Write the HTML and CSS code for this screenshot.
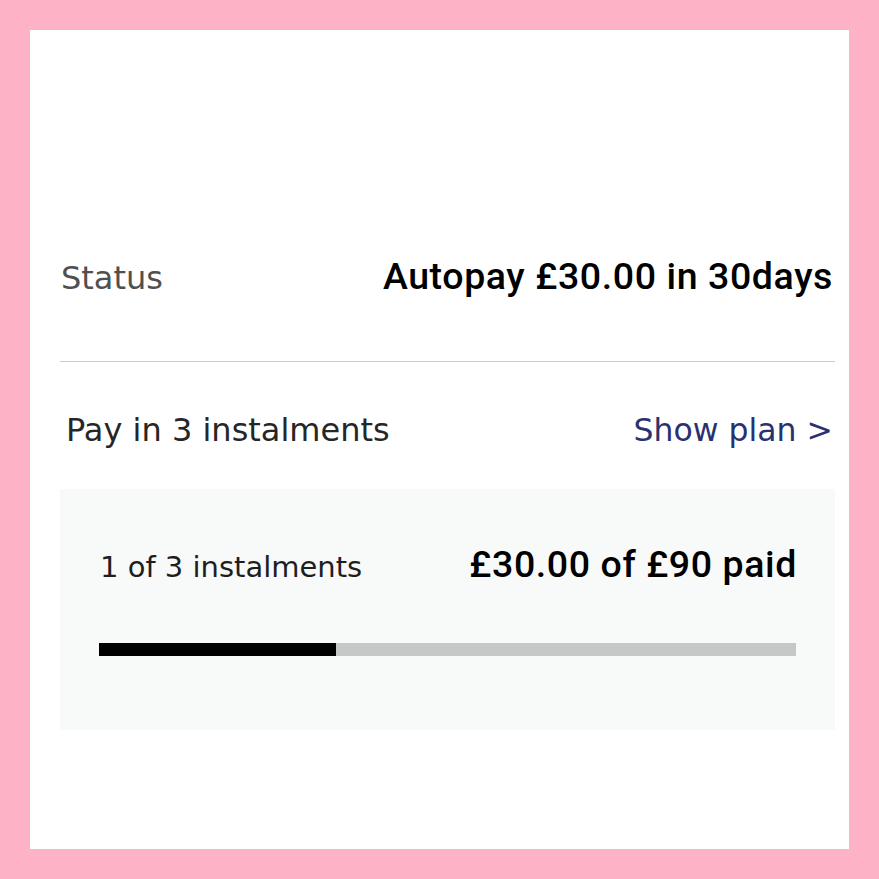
FILE: index.html
```html
<!DOCTYPE html>
<html lang="en">
<head>
<meta charset="utf-8">
<title>Instalments</title>
<link rel="stylesheet" href="styles.css">
</head>
<body>
<div class="frame">
  <div class="panel">
    <div class="row status-row">
      <span class="label">Status</span>
      <span class="value">Autopay £30.00 in 30days</span>
    </div>
    <div class="divider"></div>
    <div class="row plan-row">
      <span class="plan-title">Pay in 3 instalments</span>
      <span class="plan-link">Show plan &gt;</span>
    </div>
    <div class="card">
      <div class="row card-row">
        <span class="card-label">1 of 3 instalments</span>
        <span class="value">£30.00 of £90 paid</span>
      </div>
      <div class="progress"><div class="progress-fill" style="width:34%"></div></div>
    </div>
  </div>
</div>
</body>
</html>
```
FILE: styles.css
```css
html, body {
  margin: 0;
  padding: 0;
}
.frame {
  width: 879px;
  height: 879px;
  box-sizing: border-box;
  padding: 30px;
  background: #feb2c5;
}
.panel {
  height: 100%;
  box-sizing: border-box;
  background: #ffffff;
  padding: 226px 14px 0 30px;
}
.row {
  display: flex;
  justify-content: space-between;
  align-items: baseline;
}
.label {
  font-family: "DejaVu Sans", Lato, sans-serif;
  font-size: 32px;
  line-height: 40px;
  color: #505050;
  padding-left: 1px;
}
.value {
  font-family: Roboto, "Liberation Sans", sans-serif;
  font-weight: 500;
  font-size: 37.5px;
  letter-spacing: 0.6px;
  line-height: 40px;
  color: #000;
}
.status-row {
  padding-right: 2px;
}
.divider {
  margin-top: 63px;
  height: 1px;
  background: #cccccc;
}
.plan-row {
  margin-top: 48px;
  padding: 0 2px 0 6px;
}
.plan-title {
  font-family: "DejaVu Sans", Lato, sans-serif;
  font-size: 32px;
  line-height: 40px;
  color: #262626;
}
.plan-link {
  font-family: "DejaVu Sans", Lato, sans-serif;
  font-size: 31.5px;
  line-height: 40px;
  color: #29326f;
}
.card {
  margin-top: 39px;
  height: 241px;
  box-sizing: border-box;
  background: #f8f9f9;
  padding: 55px 38px 0 39px;
}
.card-label {
  font-family: "DejaVu Sans", Lato, sans-serif;
  font-size: 29px;
  line-height: 40px;
  color: #1e1e1e;
  padding-left: 1px;
}
.progress {
  margin-top: 56px;
  margin-right: 1px;
  height: 13px;
  background: #c6c8c7;
}
.progress-fill {
  height: 100%;
  background: #000;
}
```
